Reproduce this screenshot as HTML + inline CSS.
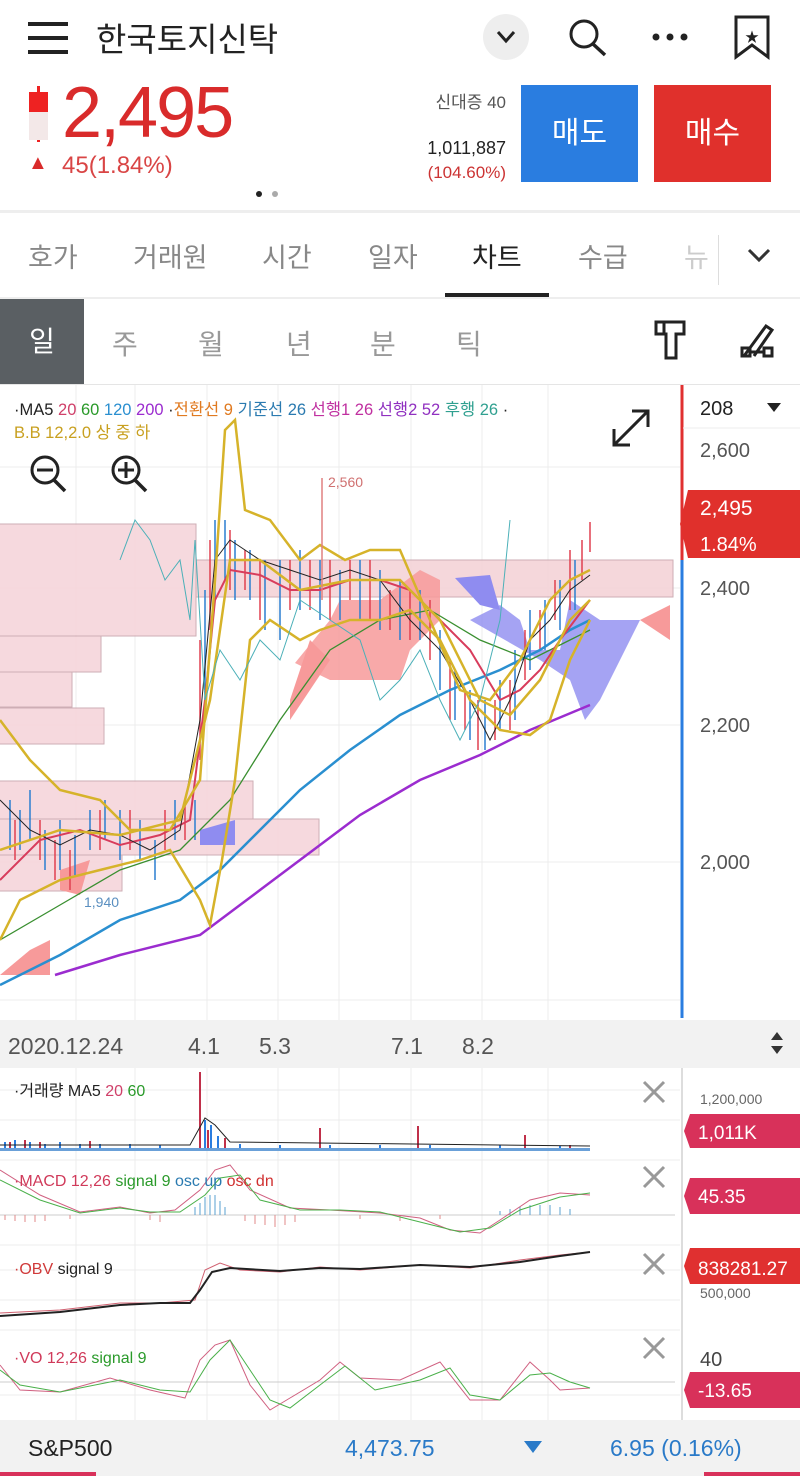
<!DOCTYPE html>
<html><head><meta charset="utf-8"><style>
*{margin:0;padding:0;box-sizing:border-box}
body{width:800px;height:1476px;background:#fff;font-family:"Liberation Sans","Noto Sans CJK KR",sans-serif;position:relative;overflow:hidden}
.a{position:absolute;white-space:nowrap}
</style></head><body>
<div class="a" style="left:28px;top:22px;width:40px;height:4px;background:#222"></div>
<div class="a" style="left:28px;top:36px;width:40px;height:4px;background:#222"></div>
<div class="a" style="left:28px;top:50px;width:40px;height:4px;background:#222"></div>
<div class="a" style="left:96px;top:13px;font-size:33px;color:#222">한국토지신탁</div>
<div class="a" style="left:483px;top:14px;width:46px;height:46px;border-radius:23px;background:#eee"></div>
<svg class="a" style="left:0;top:0" width="800" height="80"><polyline points="498,32 506,41 514,32" fill="none" stroke="#222" stroke-width="3"/>
<circle cx="584" cy="34" r="13" fill="none" stroke="#222" stroke-width="3"/><line x1="593" y1="44" x2="605" y2="55" stroke="#222" stroke-width="3.5"/>
<circle cx="656" cy="37" r="3.5" fill="#222"/><circle cx="670" cy="37" r="3.5" fill="#222"/><circle cx="684" cy="37" r="3.5" fill="#222"/>
<path d="M736 17 H768 V57 L752 45 L736 57 Z" fill="none" stroke="#222" stroke-width="3"/><text x="745" y="42" font-size="14" fill="#222">★</text></svg>
<div class="a" style="left:37px;top:86px;width:3px;height:56px;background:#e22"></div>
<div class="a" style="left:29px;top:92px;width:19px;height:20px;background:#e22"></div>
<div class="a" style="left:29px;top:112px;width:19px;height:28px;background:#f3e8e8"></div>
<div class="a" style="left:62px;top:72px;font-size:72px;color:#d92b2b;letter-spacing:-2px">2,495</div>
<div class="a" style="left:28px;top:152px;font-size:20px;color:#d92b2b">▲</div>
<div class="a" style="left:62px;top:152px;font-size:24px;color:#d94545">45(1.84%)</div>
<div class="a" style="left:256px;top:191px;width:6px;height:6px;border-radius:3px;background:#222"></div>
<div class="a" style="left:272px;top:191px;width:6px;height:6px;border-radius:3px;background:#aaa"></div>
<div class="a" style="right:294px;top:88px;font-size:17px;color:#555">신대증 40</div>
<div class="a" style="right:294px;top:138px;font-size:18px;color:#222">1,011,887</div>
<div class="a" style="right:294px;top:163px;font-size:17px;color:#c33">(104.60%)</div>
<div class="a" style="left:521px;top:85px;width:117px;height:97px;background:#2a7de0;color:#fff;font-size:30px;text-align:center;line-height:97px">매도</div>
<div class="a" style="left:654px;top:85px;width:117px;height:97px;background:#e0302c;color:#fff;font-size:30px;text-align:center;line-height:97px">매수</div>
<div class="a" style="left:0;top:210px;width:800px;height:3px;background:#eee"></div>
<div class="a" style="left:28px;top:236px;font-size:27px;color:#888">호가</div>
<div class="a" style="left:133px;top:236px;font-size:27px;color:#888">거래원</div>
<div class="a" style="left:262px;top:236px;font-size:27px;color:#888">시간</div>
<div class="a" style="left:368px;top:236px;font-size:27px;color:#888">일자</div>
<div class="a" style="left:472px;top:236px;font-size:27px;color:#222">차트</div>
<div class="a" style="left:578px;top:236px;font-size:27px;color:#888">수급</div>
<div class="a" style="left:684px;top:236px;font-size:27px;color:#ccc">뉴</div>
<div class="a" style="left:718px;top:235px;width:1px;height:50px;background:#ddd"></div>
<svg class="a" style="left:745px;top:245px" width="30" height="20"><polyline points="4,5 14,15 24,5" fill="none" stroke="#333" stroke-width="3"/></svg>
<div class="a" style="left:445px;top:293px;width:104px;height:4px;background:#222"></div>
<div class="a" style="left:0;top:297px;width:800px;height:2px;background:#eee"></div>
<div class="a" style="left:0;top:299px;width:84px;height:86px;background:#5a5f63;color:#fff;font-size:28px;text-align:center;line-height:86px">일</div>
<div class="a" style="left:112px;top:323px;font-size:28px;color:#999">주</div>
<div class="a" style="left:198px;top:323px;font-size:28px;color:#999">월</div>
<div class="a" style="left:286px;top:323px;font-size:28px;color:#999">년</div>
<div class="a" style="left:370px;top:323px;font-size:28px;color:#999">분</div>
<div class="a" style="left:456px;top:323px;font-size:28px;color:#999">틱</div>
<svg class="a" style="left:650px;top:318px" width="130" height="46">
<path d="M6 4 H34 V16 H26 V40 H16 V16 H6 Z" fill="none" stroke="#222" stroke-width="3"/><line x1="14" y1="4" x2="14" y2="16" stroke="#222" stroke-width="3"/>
<path d="M94 38 L116 8 L122 12 L104 38" fill="none" stroke="#222" stroke-width="3"/><rect x="92" y="30" width="8" height="8" fill="none" stroke="#222" stroke-width="3"/><rect x="114" y="30" width="8" height="8" fill="none" stroke="#222" stroke-width="3"/><line x1="100" y1="34" x2="114" y2="34" stroke="#222" stroke-width="3"/></svg>
<div class="a" style="left:0;top:384px;width:800px;height:1px;background:#e5e5e5"></div>
<svg class="a" style="left:0;top:385px" width="800" height="1091" viewBox="0 385 800 1091">
<g stroke="#ececec" stroke-width="1">
<line x1="76" y1="385" x2="76" y2="1420"/><line x1="135" y1="385" x2="135" y2="1420"/><line x1="207" y1="385" x2="207" y2="1420"/><line x1="278" y1="385" x2="278" y2="1420"/><line x1="339" y1="385" x2="339" y2="1420"/><line x1="411" y1="385" x2="411" y2="1420"/><line x1="482" y1="385" x2="482" y2="1420"/><line x1="548" y1="385" x2="548" y2="1420"/>
<line x1="0" y1="467" x2="680" y2="467"/><line x1="0" y1="588" x2="680" y2="588"/><line x1="0" y1="725" x2="680" y2="725"/><line x1="0" y1="862" x2="680" y2="862"/><line x1="0" y1="1000" x2="680" y2="1000"/>
</g>
<g fill="#f6d5db" stroke="#c9a6ad" stroke-width="1" opacity="0.9">
<rect x="-1" y="560" width="674" height="37" fill="#f4d3d8"/>
<rect x="-1" y="524" width="197" height="112"/><rect x="-1" y="636" width="102" height="36"/><rect x="-1" y="672" width="73" height="35"/><rect x="-1" y="708" width="105" height="36"/>
<rect x="-1" y="781" width="254" height="38"/><rect x="-1" y="819" width="320" height="36"/><rect x="-1" y="855" width="123" height="36"/>
</g>
<path d="M295 663 L330 620 L340 600 L380 600 L420 570 L440 580 L440 620 L410 650 L400 680 L330 680 Z" fill="#f79a9a" opacity="0.85"/>
<path d="M290 700 L310 640 L330 660 L290 720 Z" fill="#f79a9a"/>
<path d="M470 620 L500 605 L520 620 L530 650 L560 650 L570 600 L600 620 L640 620 L600 700 L585 720 L570 680 L540 660 Z" fill="#8f8cf0" opacity="0.8"/>
<path d="M455 578 L490 575 L500 610 L480 605 Z" fill="#8f8cf0"/>
<path d="M640 620 L670 605 L670 640 Z" fill="#f79a9a"/>
<path d="M200 830 L235 820 L235 845 L200 845 Z" fill="#8f8cf0"/>
<path d="M60 870 L90 860 L80 895 L60 890 Z M0 975 L30 950 L50 940 L50 975 Z" fill="#f79a9a"/>
<g stroke="#2b7fd0" stroke-width="1.5">
<path d="M10 800v50M20 810v40M30 790v50M45 830v40M60 820v50M75 835v40M90 810v40M105 800v40M120 810v50M140 820v40M155 840v40M175 800v40M195 800v40M205 590v100M215 520v80M225 520v60M235 540v60M250 550v50M265 560v70M280 560v80M300 550v60M320 560v60M340 570v50M360 560v60M380 570v60M400 580v60M420 590v50M440 630v60M455 670v50M470 690v50M485 700v50M500 680v50M515 650v70M530 610v60M545 600v50M560 580v50M575 560v50"/>
</g>
<g stroke="#e04050" stroke-width="1.5">
<path d="M15 820v40M40 820v40M55 840v40M70 850v40M100 810v40M130 810v40M165 810v40M185 800v40M200 640v120M210 540v90M230 530v60M245 550v40M260 560v60M290 560v50M310 560v50M330 560v60M350 560v40M370 560v60M390 590v40M410 590v50M430 600v60M450 660v60M465 690v40M478 700v50M495 700v40M510 680v50M525 630v50M540 610v40M555 580v40M570 550v60M582 540v40M590 522v30"/>
</g>
<polyline fill="none" stroke="#2a8fd0" stroke-width="2.5" points="0,985 60,955 120,920 180,900 220,870 260,830 300,790 350,750 400,715 450,690 500,670 540,650 570,630 590,620"/>
<polyline fill="none" stroke="#9b2ccf" stroke-width="2.5" points="55,975 120,955 200,935 240,905 300,860 360,815 420,780 480,755 530,730 590,705"/>
<polyline fill="none" stroke="#3a8f30" stroke-width="1.3" points="0,940 60,905 120,870 180,850 230,800 280,720 330,650 380,620 430,610 480,640 530,660 570,640 590,630"/>
<polyline fill="none" stroke="#d83c5c" stroke-width="2" points="0,880 40,840 80,830 120,845 160,835 190,820 205,700 215,600 230,570 260,575 290,590 320,590 350,580 380,580 410,590 440,620 470,650 500,700 520,690 540,670 560,640 590,600"/>
<polyline fill="none" stroke="#222" stroke-width="1" points="0,800 30,830 60,845 90,830 120,835 150,850 180,830 200,720 215,560 230,540 260,560 290,570 320,580 350,570 380,580 410,620 440,650 470,700 490,740 510,700 530,640 550,620 570,590 590,575"/>
<g fill="none" stroke="#d6b32a" stroke-width="2.5">
<polyline points="0,720 30,760 60,790 100,800 130,830 170,830 200,780 215,580 225,430 235,420 245,510 270,520 300,560 320,545 345,560 370,550 400,550 430,620 460,690 490,700 520,660 550,600 570,580 590,570"/>
<polyline points="0,940 20,900 60,880 100,870 140,860 170,850 200,900 210,925 222,860 235,780 250,640 270,620 300,640 320,630 350,620 380,620 410,610 440,640 470,700 500,730 530,735 550,720 570,660 590,620"/>
<polyline points="0,850 60,830 120,835 180,820 210,700 230,560 260,560 300,590 350,580 400,580 440,620 480,700 510,715 540,680 570,620 590,600"/>
</g>
<polyline fill="none" stroke="#4bb0b8" stroke-width="1" points="120,560 135,520 150,540 165,580 180,560 190,620 195,540 205,700 220,650 240,680 260,640 280,660 300,600 330,620 360,640 380,700 400,680 420,650 440,700 460,740 480,700 500,620 510,520"/>
<line x1="322" y1="478" x2="322" y2="600" stroke="#e08080" stroke-width="1.5"/>
<text x="328" y="487" font-size="14" fill="#d07070">2,560</text>
<text x="84" y="907" font-size="14" fill="#5a8fc0">1,940</text>
<text x="14" y="415" font-size="16.5" fill="#222">·MA5 <tspan fill="#d0406a">20</tspan> <tspan fill="#2a9a2a">60</tspan> <tspan fill="#2a8fd0">120</tspan> <tspan fill="#9b2ccf">200</tspan> ·<tspan fill="#e07a20">전환선 9</tspan> <tspan fill="#2a7ab0">기준선 26</tspan> <tspan fill="#c030a0">선행1 26</tspan> <tspan fill="#9030c0">선행2 52</tspan> <tspan fill="#30a090">후행 26</tspan> ·</text>
<text x="14" y="438" font-size="16.5" fill="#c8a020">B.B 12,2.0 상 중 하</text>
<circle cx="45" cy="470" r="13" fill="none" stroke="#222" stroke-width="3"/><line x1="37" y1="470" x2="53" y2="470" stroke="#222" stroke-width="3"/><line x1="54" y1="480" x2="65" y2="491" stroke="#222" stroke-width="3.5"/>
<circle cx="126" cy="470" r="13" fill="none" stroke="#222" stroke-width="3"/><line x1="118" y1="470" x2="134" y2="470" stroke="#222" stroke-width="3"/><line x1="126" y1="462" x2="126" y2="478" stroke="#222" stroke-width="3"/><line x1="135" y1="480" x2="146" y2="491" stroke="#222" stroke-width="3.5"/>
<path d="M614 445 L648 411 M632 411 H648 V427 M614 429 V445 H630" fill="none" stroke="#222" stroke-width="3"/>
<rect x="683" y="385" width="117" height="635" fill="#fff"/>
<line x1="682" y1="385" x2="682" y2="560" stroke="#e03030" stroke-width="3"/>
<line x1="682" y1="560" x2="682" y2="1018" stroke="#2a7de0" stroke-width="3"/>
<line x1="683" y1="428" x2="800" y2="428" stroke="#eee"/>
<text x="700" y="415" font-size="20" fill="#222">208</text><path d="M767 403 H781 L774 412 Z" fill="#222"/>
<g font-size="20" fill="#555"><text x="700" y="457">2,600</text><text x="700" y="595">2,400</text><text x="700" y="732">2,200</text><text x="700" y="869">2,000</text></g>
<path d="M688 490 H800 V558 H688 L680 524 Z" fill="#e0302c"/>
<text x="700" y="515" font-size="21" fill="#fff">2,495</text><text x="700" y="551" font-size="20" fill="#fff">1.84%</text>
<rect x="0" y="1020" width="800" height="48" fill="#f2f2f2"/>
<g font-size="23" fill="#555"><text x="8" y="1054">2020.12.24</text><text x="188" y="1054">4.1</text><text x="259" y="1054">5.3</text><text x="391" y="1054">7.1</text><text x="462" y="1054">8.2</text></g>
<path d="M771 1040 L777 1032 L783 1040 Z M771 1046 L777 1054 L783 1046 Z" fill="#333"/>
<line x1="682" y1="1068" x2="682" y2="1420" stroke="#ddd" stroke-width="2"/>
<g stroke="#ececec"><line x1="0" y1="1090" x2="680" y2="1090"/><line x1="0" y1="1120" x2="680" y2="1120"/><line x1="0" y1="1160" x2="680" y2="1160"/><line x1="0" y1="1245" x2="680" y2="1245"/><line x1="0" y1="1270" x2="680" y2="1270"/><line x1="0" y1="1300" x2="680" y2="1300"/><line x1="0" y1="1330" x2="680" y2="1330"/><line x1="0" y1="1395" x2="680" y2="1395"/></g>
<g stroke="#2a7de0" stroke-width="2"><path d="M5 1150v-8M15 1150v-10M30 1150v-8M45 1150v-6M60 1150v-8M80 1150v-6M100 1150v-6M130 1150v-6M160 1150v-5M205 1150v-30M211 1150v-25M218 1150v-14M240 1150v-6M280 1150v-5M330 1150v-5M380 1150v-5M430 1150v-5M500 1150v-5M560 1150v-4"/></g>
<g stroke="#c0304a" stroke-width="2"><path d="M10 1150v-8M25 1150v-10M40 1150v-8M90 1150v-9M200 1150v-78M208 1150v-20M225 1150v-12M320 1150v-22M418 1150v-24M525 1150v-15M570 1150v-5"/></g>
<rect x="0" y="1148" width="590" height="3" fill="#6aa0d8"/>
<polyline fill="none" stroke="#222" stroke-width="1" points="0,1145 190,1145 205,1118 215,1125 230,1142 590,1146"/>
<text x="14" y="1096" font-size="16" fill="#222">·거래량 MA5 <tspan fill="#d0406a">20</tspan> <tspan fill="#2a9a2a">60</tspan></text>
<line x1="0" y1="1215" x2="675" y2="1215" stroke="#ccc"/>
<g stroke="#5aa0d0" stroke-width="1"><path d="M195 1215v-8M200 1215v-12M205 1215v-18M210 1215v-20M215 1215v-20M220 1215v-14M225 1215v-8M500 1215v-4M510 1215v-6M520 1215v-8M530 1215v-10M540 1215v-10M550 1215v-10M560 1215v-8M570 1215v-6"/></g>
<g stroke="#e08a8a" stroke-width="1"><path d="M5 1215v5M15 1215v6M25 1215v7M35 1215v7M45 1215v6M70 1215v4M150 1215v5M160 1215v7M245 1215v6M255 1215v9M265 1215v10M275 1215v12M285 1215v10M295 1215v7M360 1215v4M400 1215v6M440 1215v4"/></g>
<polyline fill="none" stroke="#d06080" stroke-width="1" points="0,1170 40,1195 80,1212 120,1207 150,1213 175,1210 200,1190 215,1170 230,1165 250,1190 290,1208 330,1210 380,1213 420,1218 450,1230 480,1233 500,1220 530,1200 560,1193 590,1195"/>
<polyline fill="none" stroke="#4ab04a" stroke-width="1" points="0,1180 40,1200 80,1213 120,1208 150,1212 180,1212 205,1195 220,1178 240,1175 260,1200 300,1210 340,1210 380,1212 420,1222 460,1232 490,1228 520,1210 560,1197 590,1193"/>
<text x="14" y="1186" font-size="16" fill="#d03a5a">·MACD 12,26 <tspan fill="#2a9a2a">signal 9</tspan> <tspan fill="#2a7ab0">osc up</tspan> <tspan fill="#d03030">osc dn</tspan></text>
<polyline fill="none" stroke="#d06070" stroke-width="1" points="0,1313 60,1310 120,1303 160,1303 195,1300 205,1270 220,1263 240,1270 280,1272 320,1267 360,1270 420,1265 470,1268 520,1260 560,1255 590,1252"/>
<polyline fill="none" stroke="#222" stroke-width="2" points="0,1316 60,1312 120,1305 160,1303 190,1303 200,1290 212,1272 230,1268 280,1271 320,1268 360,1269 420,1265 470,1267 520,1262 560,1256 590,1252"/>
<text x="14" y="1274" font-size="16" fill="#d03a3a">·OBV <tspan fill="#222">signal 9</tspan></text>
<line x1="0" y1="1382" x2="675" y2="1382" stroke="#ccc"/>
<polyline fill="none" stroke="#d06080" stroke-width="1" points="0,1365 20,1390 60,1392 110,1378 150,1390 185,1398 200,1360 215,1345 230,1340 250,1385 270,1410 290,1398 320,1380 340,1362 360,1378 400,1380 440,1362 470,1400 500,1400 530,1362 550,1380 560,1390 590,1388"/>
<polyline fill="none" stroke="#4ab04a" stroke-width="1" points="0,1370 20,1385 60,1392 120,1380 160,1390 190,1392 210,1360 230,1340 250,1370 270,1400 290,1408 320,1385 345,1366 375,1390 420,1380 450,1368 470,1395 500,1400 530,1375 550,1373 570,1382 590,1388"/>
<text x="14" y="1363" font-size="16" fill="#d03a5a">·VO 12,26 <tspan fill="#2a9a2a">signal 9</tspan></text>
<g stroke="#999" stroke-width="3"><path d="M644 1082l20 20M664 1082l-20 20M644 1167l20 20M664 1167l-20 20M644 1254l20 20M664 1254l-20 20M644 1338l20 20M664 1338l-20 20"/></g>
<text x="700" y="1104" font-size="14" fill="#666">1,200,000</text>
<path d="M690 1114 H800 V1148 H690 L684 1131 Z" fill="#d8315a"/><text x="698" y="1139" font-size="19" fill="#fff">1,011K</text>
<path d="M690 1178 H800 V1214 H690 L684 1196 Z" fill="#d8315a"/><text x="698" y="1203" font-size="19" fill="#fff">45.35</text>
<path d="M690 1248 H800 V1284 H690 L684 1266 Z" fill="#e03030"/><text x="698" y="1275" font-size="19" fill="#fff">838281.27</text>
<text x="700" y="1298" font-size="14" fill="#666">500,000</text>
<text x="700" y="1366" font-size="20" fill="#444">40</text>
<path d="M690 1372 H800 V1408 H690 L684 1390 Z" fill="#d8315a"/><text x="698" y="1397" font-size="19" fill="#fff">-13.65</text>
<rect x="0" y="1420" width="800" height="56" fill="#f2f2f2"/>
<text x="28" y="1456" font-size="23" fill="#222">S&amp;P500</text>
<text x="345" y="1456" font-size="23" fill="#2a7ac8">4,473.75</text>
<path d="M524 1441 H542 L533 1453 Z" fill="#2a7ac8"/>
<text x="610" y="1456" font-size="23" fill="#2a7ac8">6.95 (0.16%)</text>
<rect x="0" y="1472" width="96" height="4" fill="#d8315a"/><rect x="704" y="1472" width="96" height="4" fill="#d8315a"/>
</svg>
</body></html>
